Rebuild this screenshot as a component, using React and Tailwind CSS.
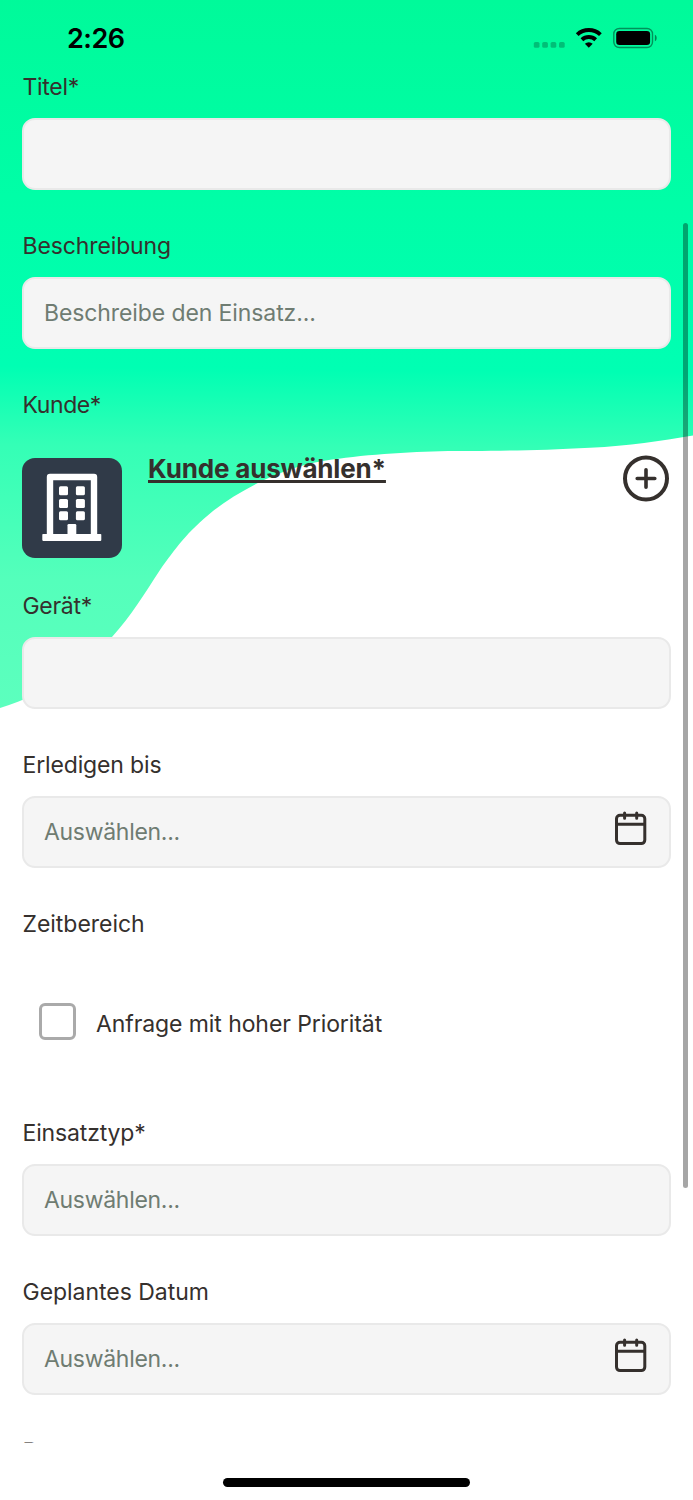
import React from "react";

function Backdrop() {
  return (
    <svg className="absolute left-0 top-0" width="693" height="720" viewBox="0 0 693 720" aria-hidden="true">
      <defs>
        <linearGradient id="mint" gradientUnits="userSpaceOnUse" x1="346" y1="0" x2="340" y2="710">
          <stop offset="0" stopColor="#00fa9a" />
          <stop offset="0.28" stopColor="#00fea7" />
          <stop offset="0.52" stopColor="#00ffb3" />
          <stop offset="0.63" stopColor="#34ffb6" />
          <stop offset="0.82" stopColor="#54ffbb" />
          <stop offset="1" stopColor="#5cffbe" />
        </linearGradient>
      </defs>
      <path
        d="M0 0H693V435.500C660 441 630 446 590 447.700C530 451 480 451 440 451.200C400 452 350 456 320 461.500C280 469 240 490 213 511C187 532 175 549 160 570C145 593 131 616 112 637C85 668 50 692 0 708Z"
        fill="url(#mint)"
      />
    </svg>
  );
}

function StatusBar() {
  return (
    <div className="flex h-[72px] shrink-0 items-start justify-between pl-[67px] pr-9">
      <span className="pt-[21px] text-[27px] leading-[36px] font-semibold tracking-[-0.5px] text-black">2:26</span>
      <svg className="mt-6" width="124" height="28" viewBox="533 24 124 28" aria-hidden="true">
        <g fill="#000" fillOpacity="0.24">
          <rect x="533.800" y="42" width="5.700" height="5.800" rx="1.600" />
          <rect x="542.200" y="42" width="5.700" height="5.800" rx="1.600" />
          <rect x="550.600" y="42" width="5.700" height="5.800" rx="1.600" />
          <rect x="559" y="42" width="5.700" height="5.800" rx="1.600" />
        </g>
        <g fill="none" stroke="#000" strokeWidth="4">
          <path d="M577.200 34.600A17 17 0 0 1 600.400 34.600" />
          <path d="M581.900 39.700A10.200 10.200 0 0 1 595.700 39.700" />
        </g>
        <path d="M588.800 47.800L584.900 43.700A5.800 5.800 0 0 1 592.700 43.700Z" fill="#000" />
        <rect x="613.800" y="28.500" width="38.700" height="19" rx="5.500" fill="none" stroke="#000" strokeOpacity="0.42" strokeWidth="1.400" />
        <rect x="616.200" y="30.900" width="33.900" height="14.200" rx="3.300" fill="#000" />
        <path d="M654.900 34.800C657.300 35.800 657.300 40.200 654.900 41.200Z" fill="#000" fillOpacity="0.45" />
      </svg>
    </div>
  );
}

function CalendarIcon() {
  return (
    <svg width="34" height="36" viewBox="0 0 34 36" fill="none" stroke="#35302d" strokeWidth="3" strokeLinecap="round" aria-hidden="true">
      <rect x="2.500" y="5.300" width="28.300" height="28.300" rx="3.500" />
      <path d="M3 14.200H30.500M10.600 3V8.300M22.700 3V8.300" />
    </svg>
  );
}

function Label({ children, className = "tracking-[-0.12px]" }) {
  return <div className={"h-[30px] whitespace-nowrap pl-[0.5px] text-[23px] leading-[30px] text-[#35302d] " + className}>{children}</div>;
}

function Field({ label, placeholder, calendar, labelClass, placeholderClass = "tracking-[-0.3px]" }) {
  return (
    <div className="flex h-[159px] shrink-0 flex-col">
      <Label className={labelClass}>{label}</Label>
      <div className="mt-4 flex h-[71.5px] items-center justify-between rounded-[13px] border-2 border-[#e9e9e9] bg-[#f5f5f5] pl-[20px] pr-[21px] text-[23px] leading-[30px] text-[#6f7c72]">
        <span className={placeholderClass}>{placeholder}</span>
        {calendar && (
          <span className="pb-[7px]">
            <CalendarIcon />
          </span>
        )}
      </div>
    </div>
  );
}

function CustomerPicker() {
  return (
    <div className="flex h-[201px] shrink-0 flex-col">
      <Label className="tracking-[-0.4px]">Kunde*</Label>
      <div className="mt-[38px] flex items-start">
        <svg width="100" height="100" viewBox="0 0 100 100" className="shrink-0 rounded-[13px] bg-[#303a48]" aria-hidden="true">
          <path d="M28 76V19H72V76" fill="none" stroke="#fff" strokeWidth="6.400" strokeLinejoin="round" />
          <g fill="#fff">
            <rect x="20.300" y="76" width="59" height="6.900" rx="0.800" />
            <rect x="37" y="28.300" width="9" height="9" rx="1.500" />
            <rect x="53.900" y="28.300" width="9" height="9" rx="1.500" />
            <rect x="37" y="41" width="9" height="9" rx="1.500" />
            <rect x="53.900" y="41" width="9" height="9" rx="1.500" />
            <rect x="37" y="53.300" width="9" height="9" rx="1.500" />
            <rect x="53.900" y="53.300" width="9" height="9" rx="1.500" />
            <path d="M45.500 77V67.300Q45.500 66 46.800 66H53Q54.300 66 54.300 67.300V77Z" />
          </g>
        </svg>
        <span className="ml-[26px] -mt-[6px] whitespace-nowrap text-[26px] leading-[34px] font-bold tracking-[-0.17px] text-[#35302d] underline decoration-[2.5px] underline-offset-[2px] [text-decoration-skip-ink:none]">
          Kunde auswählen*
        </span>
        <svg className="-mt-[3px] ml-auto mr-[1px]" width="48" height="48" viewBox="0 0 48 48" fill="none" stroke="#35302d" strokeLinecap="round" aria-hidden="true">
          <circle cx="24" cy="23.500" r="21" strokeWidth="4" />
          <path d="M15.200 23.500H32.800M24 14.700V32.300" strokeWidth="3.600" />
        </svg>
      </div>
    </div>
  );
}

export default function App() {
  return (
    <div className="relative h-[1500px] w-[693px] overflow-hidden bg-white font-['Inter','Liberation_Sans',sans-serif]">
      <Backdrop />
      <div className="relative flex h-full flex-col">
        <StatusBar />
        <main className="flex h-[1371px] shrink-0 flex-col overflow-hidden px-[22px]">
          <Field label="Titel*" labelClass="tracking-[-0.3px]" />
          <Field label="Beschreibung" placeholder="Beschreibe den Einsatz..." placeholderClass="tracking-[-0.1px]" />
          <CustomerPicker />
          <Field label="Gerät*" labelClass="tracking-[-0.3px]" />
          <Field label="Erledigen bis" placeholder="Auswählen..." calendar labelClass="tracking-[-0.15px]" />
          <div className="flex h-[209px] shrink-0 flex-col">
            <Label className="tracking-[-0.03px]">Zeitbereich</Label>
            <div className="mt-[64px] flex items-start pl-[16.5px]">
              <span className="h-[37px] w-[37px] rounded-[6px] border-[3px] border-[#aaaaaa] bg-white" />
              <Label className="ml-5 mt-[6px] tracking-[-0.09px]">Anfrage mit hoher Priorität</Label>
            </div>
          </div>
          <Field label="Einsatztyp*" placeholder="Auswählen..." labelClass="tracking-[-0.15px]" />
          <Field label="Geplantes Datum" placeholder="Auswählen..." calendar labelClass="tracking-[-0.03px]" />
          <Label className="opacity-60">P</Label>
        </main>
        <div className="mt-[35px] h-[8.5px] w-[247px] shrink-0 self-center rounded-full bg-black" />
      </div>
      <div className="absolute right-[5px] top-[223px] h-[965px] w-[5px] rounded-full bg-black/35" />
    </div>
  );
}
